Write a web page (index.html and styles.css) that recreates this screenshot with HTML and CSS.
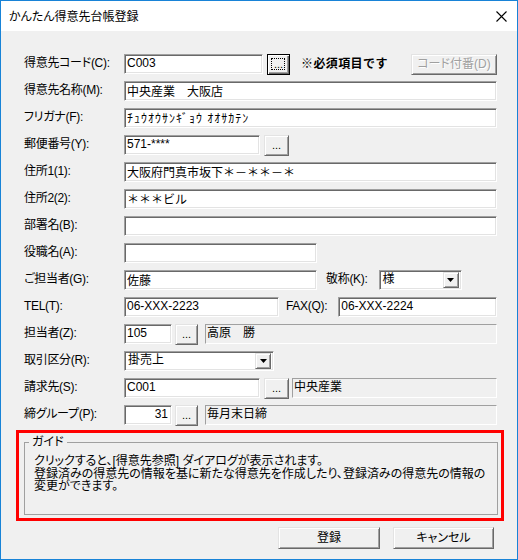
FILE: index.html
```html
<!DOCTYPE html>
<html lang="ja">
<head>
    <meta charset="UTF-8">
    <title>かんたん得意先台帳登録</title>
    <link rel="stylesheet" href="styles.css">
</head>
<body>
    <div class="window">
        <div class="titlebar">
            <span class="title">かんたん得意先台帳登録</span>
            <svg class="close" width="11" height="11" viewBox="0 0 11 11">
                <path d="M0.5 0.5L10.5 10.5M10.5 0.5L0.5 10.5" stroke="#000" stroke-width="1.1" fill="none"/>
            </svg>
        </div>

        <div class="client">
            <div class="form">
                <div class="row">
                    <label class="lbl">得意先コード(C):</label>
                    <input class="txt w-code" value="C003">
                    <button class="btn dots focus">...</button>
                    <span class="required">※必須項目です</span>
                    <button class="btn numbering" disabled>コード付番(D)</button>
                </div>
                <div class="row">
                    <label class="lbl">得意先名称(M):</label>
                    <input class="txt fill" value="中央産業　大阪店">
                </div>
                <div class="row">
                    <label class="lbl">フリガナ(F):</label>
                    <input class="txt fill kana" value="ﾁｭｳｵｳｻﾝｷﾞｮｳ ｵｵｻｶﾃﾝ">
                </div>
                <div class="row">
                    <label class="lbl">郵便番号(Y):</label>
                    <input class="txt w-zip" value="571-****">
                    <button class="btn dots gap-l">...</button>
                </div>
                <div class="row">
                    <label class="lbl">住所1(1):</label>
                    <input class="txt fill" value="大阪府門真市坂下＊－＊＊－＊">
                </div>
                <div class="row">
                    <label class="lbl">住所2(2):</label>
                    <input class="txt fill" value="＊＊＊ビル">
                </div>
                <div class="row">
                    <label class="lbl">部署名(B):</label>
                    <input class="txt fill" value="">
                </div>
                <div class="row">
                    <label class="lbl">役職名(A):</label>
                    <input class="txt w-mid" value="">
                </div>
                <div class="row">
                    <label class="lbl">ご担当者(G):</label>
                    <input class="txt w-mid" value="佐藤">
                    <label class="lbl sub honor">敬称(K):</label>
                    <div class="combo w-honor">
                        <span class="combo-text">様</span>
                        <span class="arrow"><svg width="7" height="4" viewBox="0 0 7 4"><path d="M0 0H7L3.5 4Z" fill="#000"/></svg></span>
                    </div>
                </div>
                <div class="row">
                    <label class="lbl">TEL(T):</label>
                    <input class="txt w-tel" value="06-XXX-2223">
                    <label class="lbl sub fax">FAX(Q):</label>
                    <input class="txt fill" value="06-XXX-2224">
                </div>
                <div class="row">
                    <label class="lbl">担当者(Z):</label>
                    <input class="txt w-short" value="105">
                    <button class="btn dots small">...</button>
                    <div class="ro ro-far">高原　勝</div>
                </div>
                <div class="row">
                    <label class="lbl">取引区分(R):</label>
                    <div class="combo w-deal">
                        <span class="combo-text">掛売上</span>
                        <span class="arrow"><svg width="7" height="4" viewBox="0 0 7 4"><path d="M0 0H7L3.5 4Z" fill="#000"/></svg></span>
                    </div>
                </div>
                <div class="row">
                    <label class="lbl">請求先(S):</label>
                    <input class="txt w-zip" value="C001">
                    <button class="btn dots gap-l">...</button>
                    <div class="ro ro-near">中央産業</div>
                </div>
                <div class="row">
                    <label class="lbl">締グループ(P):</label>
                    <input class="txt w-short num" value="31">
                    <button class="btn dots small">...</button>
                    <div class="ro ro-far">毎月末日締</div>
                </div>
            </div>

            <div class="guide-frame">
                <fieldset class="guide">
                    <legend>ガイド</legend>
                    <p>クリックすると、[得意先参照] ダイアログが表示されます。<br>登録済みの得意先の情報を基に新たな得意先を作成したり、登録済みの得意先の情報の<br>変更ができます。</p>
                </fieldset>
            </div>

            <div class="actions">
                <button class="btn action ok">登録</button>
                <button class="btn action">キャンセル</button>
            </div>
        </div>
    </div>
</body>
</html>
```

FILE: styles.css
```css
* {
    box-sizing: border-box;
}

body {
    margin: 0;
    background-color: #ffffff;
    font-family: "Liberation Sans", "Noto Sans CJK JP", sans-serif;
    font-size: 12px;
    color: #000000;
    font-feature-settings: "palt";
}

.window {
    width: 518px;
    height: 560px;
    border: 1px solid #1883d7;
    background-color: #f0f0f0;
    display: flex;
    flex-direction: column;
}

.titlebar {
    height: 30px;
    flex: none;
    background-color: #ffffff;
    display: flex;
    align-items: center;
    padding: 0 10px 0 8px;
}

.title {
    flex: 1;
    font-family: "Noto Sans CJK JP", sans-serif;
    font-size: 12px;
    line-height: 14px;
}

.close {
    display: block;
}

.client {
    padding: 23px 20px 0 23px;
}

.form {
    display: flex;
    flex-direction: column;
    gap: 7px;
}

.row {
    display: flex;
    align-items: center;
    height: 20px;
}

.lbl {
    flex: none;
    width: 100px;
    line-height: 12px;
    padding-bottom: 3px;
    white-space: nowrap;
    letter-spacing: -0.3px;
}

.lbl.sub {
    width: auto;
}

.honor {
    margin: 0 11px 0 9px;
}

.fax {
    margin: 0 11px 0 7px;
}

/* edit boxes: classic sunken edge */
.txt {
    height: 20px;
    flex: none;
    min-width: 0;
    margin: 0;
    padding: 0 2px 2px;
    border: 1px solid;
    border-color: #a0a0a0 #ffffff #ffffff #a0a0a0;
    box-shadow: inset 1px 1px #696969, inset -1px -1px #e3e3e3;
    background-color: #ffffff;
    font: inherit;
    font-size: 12px;
    color: #000000;
    outline: none;
    font-feature-settings: normal;
}

.txt.fill {
    flex: 1;
    width: 0;
}

.txt.kana {
    letter-spacing: 1px;
}

.txt.num {
    text-align: right;
    padding-right: 3px;
}

.w-code { width: 139px; }
.w-zip { width: 136px; }
.w-mid { width: 193px; }
.w-tel { width: 155px; }
.w-short { width: 48px; }

/* static text with thin sunken border */
.ro {
    flex: 1;
    height: 20px;
    border: 1px solid;
    border-color: #a0a0a0 #ffffff #ffffff #a0a0a0;
    padding: 0 2px 2px 1px;
    display: flex;
    align-items: center;
    line-height: 12px;
    white-space: nowrap;
    font-feature-settings: normal;
}

.ro-far { margin-left: 7px; }
.ro-near { margin-left: 3px; }

/* raised push buttons */
.btn {
    position: relative;
    flex: none;
    height: 21px;
    margin: 0;
    padding: 0;
    border: 1px solid;
    border-color: #e3e3e3 #696969 #696969 #e3e3e3;
    box-shadow: inset 1px 1px #ffffff, inset -1px -1px #a0a0a0;
    background-color: #f0f0f0;
    font: inherit;
    font-size: 12px;
    color: #000000;
    line-height: 12px;
}

.btn.dots {
    width: 25px;
    font-size: 11px;
    letter-spacing: 0;
}

.btn.small {
    width: 23px;
    margin-left: 3px;
}

.gap-l {
    margin-left: 4px;
}

.btn.focus {
    width: 23px;
    margin-left: 4px;
    border-color: #000000;
    box-shadow: inset 1px 1px #ffffff, inset -1px -1px #696969, inset -2px -2px #a0a0a0;
}

.btn.focus::after {
    content: "";
    position: absolute;
    top: 3px;
    left: 3px;
    right: 4px;
    bottom: 4px;
    border: 1px dotted #000000;
}

.required {
    margin-left: 11px;
    font-family: "Noto Sans CJK JP", sans-serif;
    font-weight: bold;
    font-size: 12px;
    line-height: 12px;
    padding-bottom: 3px;
    letter-spacing: 0.4px;
    font-feature-settings: normal;
}

.btn.numbering {
    margin-left: auto;
    width: 86px;
    color: #a0a0a0;
    text-shadow: 1px 1px #ffffff;
}

/* combo boxes */
.combo {
    flex: none;
    height: 20px;
    display: flex;
    align-items: center;
    padding: 0 2px 0 2px;
    border: 1px solid;
    border-color: #a0a0a0 #ffffff #ffffff #a0a0a0;
    box-shadow: inset 1px 1px #696969, inset -1px -1px #e3e3e3;
    background-color: #ffffff;
}

.combo-text {
    flex: 1;
    line-height: 12px;
    padding: 0 0 2px 1px;
}

.arrow {
    width: 16px;
    height: 16px;
    display: flex;
    align-items: center;
    justify-content: center;
    border: 1px solid;
    border-color: #e3e3e3 #696969 #696969 #e3e3e3;
    box-shadow: inset 1px 1px #ffffff, inset -1px -1px #a0a0a0;
    background-color: #f0f0f0;
}

.arrow svg {
    display: block;
}

.w-honor { width: 83px; }
.w-deal { width: 150px; }

/* guide area */
.guide-frame {
    margin: 5px -7px 0 -8px;
    height: 91px;
    border: 3px solid #ff0000;
    padding: 3px 3px 0 5px;
}

.guide {
    margin: 0;
    padding: 0;
    height: 79px;
    border: 1px solid #a0a0a0;
}

.guide legend {
    margin-left: 4px;
    padding: 0 3px;
    line-height: 12px;
}

.guide p {
    margin: 7px 0 0 9px;
    line-height: 12.5px;
    white-space: nowrap;
}

.actions {
    display: flex;
    justify-content: flex-end;
    gap: 13px;
    margin: 6px 3px 0 0;
}

.btn.action {
    width: 101px;
    height: 22px;
}

.btn.ok {
    width: 102px;
}
```
